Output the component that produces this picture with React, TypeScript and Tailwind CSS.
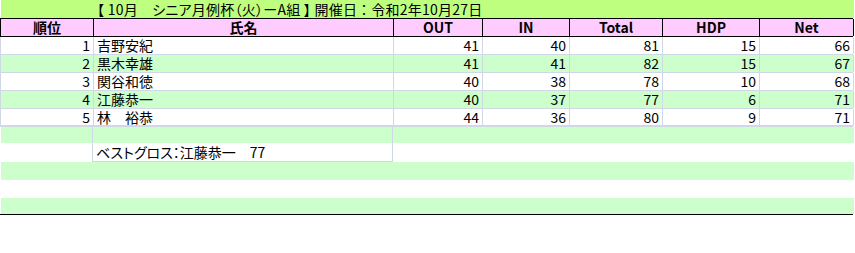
type Row = {
  rank: number;
  name: string;
  out: number;
  inn: number;
  total: number;
  hdp: number;
  net: number;
};

const rows: Row[] = [
  { rank: 1, name: "吉野安紀", out: 41, inn: 40, total: 81, hdp: 15, net: 66 },
  { rank: 2, name: "黒木幸雄", out: 41, inn: 41, total: 82, hdp: 15, net: 67 },
  { rank: 3, name: "関谷和徳", out: 40, inn: 38, total: 78, hdp: 10, net: 68 },
  { rank: 4, name: "江藤恭一", out: 40, inn: 37, total: 77, hdp: 6, net: 71 },
  { rank: 5, name: "林　裕恭", out: 44, inn: 36, total: 80, hdp: 9, net: 71 },
];

const cols = "grid grid-cols-[93px_300px_89px_87px_93px_97px_94px]";
const headers = ["順位", "氏名", "OUT", "IN", "Total", "HDP", "Net"];

export default function App() {
  return (
    <div className="w-[855px] h-[253px] bg-white text-black text-[14px] font-['Noto_Sans_CJK_JP',sans-serif] [font-feature-settings:'palt']">
      <div className="ml-[1px] w-[853px] h-[18px] bg-[#bfff80] pl-[96px] leading-[18px] tracking-[0.25px] whitespace-pre">
        【 10月　シニア月例杯（火）ーA組 】 開催日 ： 令和2年10月27日
      </div>

      <div className={`${cols} w-[853px] h-[19px] border-y border-l border-black bg-[#ffccff]`}>
        {headers.map((h) => (
          <div
            key={h}
            className="border-r border-black text-center font-bold leading-[17px]"
          >
            {h}
          </div>
        ))}
      </div>

      {rows.map((r, i) => {
        const bg = i % 2 === 1 ? "bg-[#ccffcc]" : "bg-white";
        const last = i === rows.length - 1;
        const border = last ? "border-b-2" : "border-b";
        return (
          <div
            key={r.rank}
            className={`${cols} w-[853px] h-[18px] border-l border-[#d0d7e5] ${border} ${bg}`}
          >
            <div className="border-r border-[#d0d7e5] text-right pr-[3px] leading-[17px]">{r.rank}</div>
            <div className="border-r border-[#d0d7e5] pl-[3px] leading-[17px] whitespace-pre">{r.name}</div>
            <div className="border-r border-[#d0d7e5] text-right pr-[3px] leading-[17px]">{r.out}</div>
            <div className="border-r border-[#d0d7e5] text-right pr-[3px] leading-[17px]">{r.inn}</div>
            <div className="border-r border-[#d0d7e5] text-right pr-[3px] leading-[17px]">{r.total}</div>
            <div className="border-r border-[#d0d7e5] text-right pr-[3px] leading-[17px]">{r.hdp}</div>
            <div className="border-r border-[#d0d7e5] text-right pr-[3px] leading-[17px]">{r.net}</div>
          </div>
        );
      })}

      <div className="ml-[1px] w-[853px] h-[16px] bg-[#ccffcc] flex">
        <div className="w-[92px] border-r border-[#d0d7e5]" />
        <div className="w-[300px] border-r border-[#d0d7e5]" />
      </div>

      <div className="ml-[1px] w-[853px] h-[19px] bg-white flex">
        <div className="w-[92px] border-r border-[#d0d7e5]" />
        <div className="w-[300px] border-r border-b border-[#d0d7e5] pl-[3px] leading-[18px] whitespace-pre">
          ベストグロス：江藤恭一　77
        </div>
      </div>

      <div className="ml-[1px] w-[853px] h-[18px] bg-[#ccffcc]" />
      <div className="ml-[1px] w-[853px] h-[18px] bg-white" />
      <div className="ml-[1px] w-[853px] h-[16px] bg-[#ccffcc]" />
      <div className="w-[853px] h-[1px] bg-black" />
    </div>
  );
}
